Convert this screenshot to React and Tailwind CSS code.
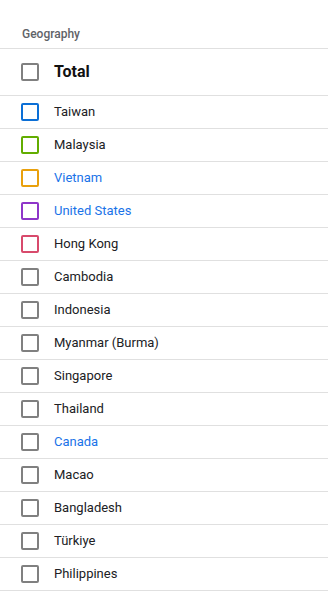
import React from "react";

const rows = [
  { name: "Taiwan", box: "border-[#0b6fd6]" },
  { name: "Malaysia", box: "border-[#62ad00]" },
  { name: "Vietnam", box: "border-[#e9a00c]", link: true },
  { name: "United States", box: "border-[#8e35c9]", link: true },
  { name: "Hong Kong", box: "border-[#d84a6c]" },
  { name: "Cambodia" },
  { name: "Indonesia" },
  { name: "Myanmar (Burma)" },
  { name: "Singapore" },
  { name: "Thailand" },
  { name: "Canada", link: true },
  { name: "Macao" },
  { name: "Bangladesh" },
  { name: "Türkiye" },
  { name: "Philippines" },
];

const Box = ({ className = "border-[#808080]" }) => (
  <span className={`w-[18px] h-[18px] shrink-0 rounded-[2px] border-2 bg-white ${className}`} />
);

export default function App() {
  return (
    <div className="w-[328px] min-h-[598px] bg-white font-['Roboto',sans-serif]">
      <div className="h-[49px] pl-[22px] pt-[26px] border-b border-[#e0e0e0] text-[12px] leading-[16px] font-medium text-[#5f6368]">
        Geography
      </div>
      <div className="h-[47px] flex items-center pl-[21px] gap-[15px] border-b border-[#e0e0e0]">
        <Box />
        <span className="text-[16px] font-bold text-[#111]">Total</span>
      </div>
      {rows.map((r) => (
        <div
          key={r.name}
          className="h-[33px] flex items-center pl-[21px] gap-[15px] border-b border-[#e0e0e0]"
        >
          <Box className={r.box || "border-[#808080]"} />
          <span className={`text-[13px] ${r.link ? "text-[#1a73e8]" : "text-[#202124]"}`}>
            {r.name}
          </span>
        </div>
      ))}
    </div>
  );
}
